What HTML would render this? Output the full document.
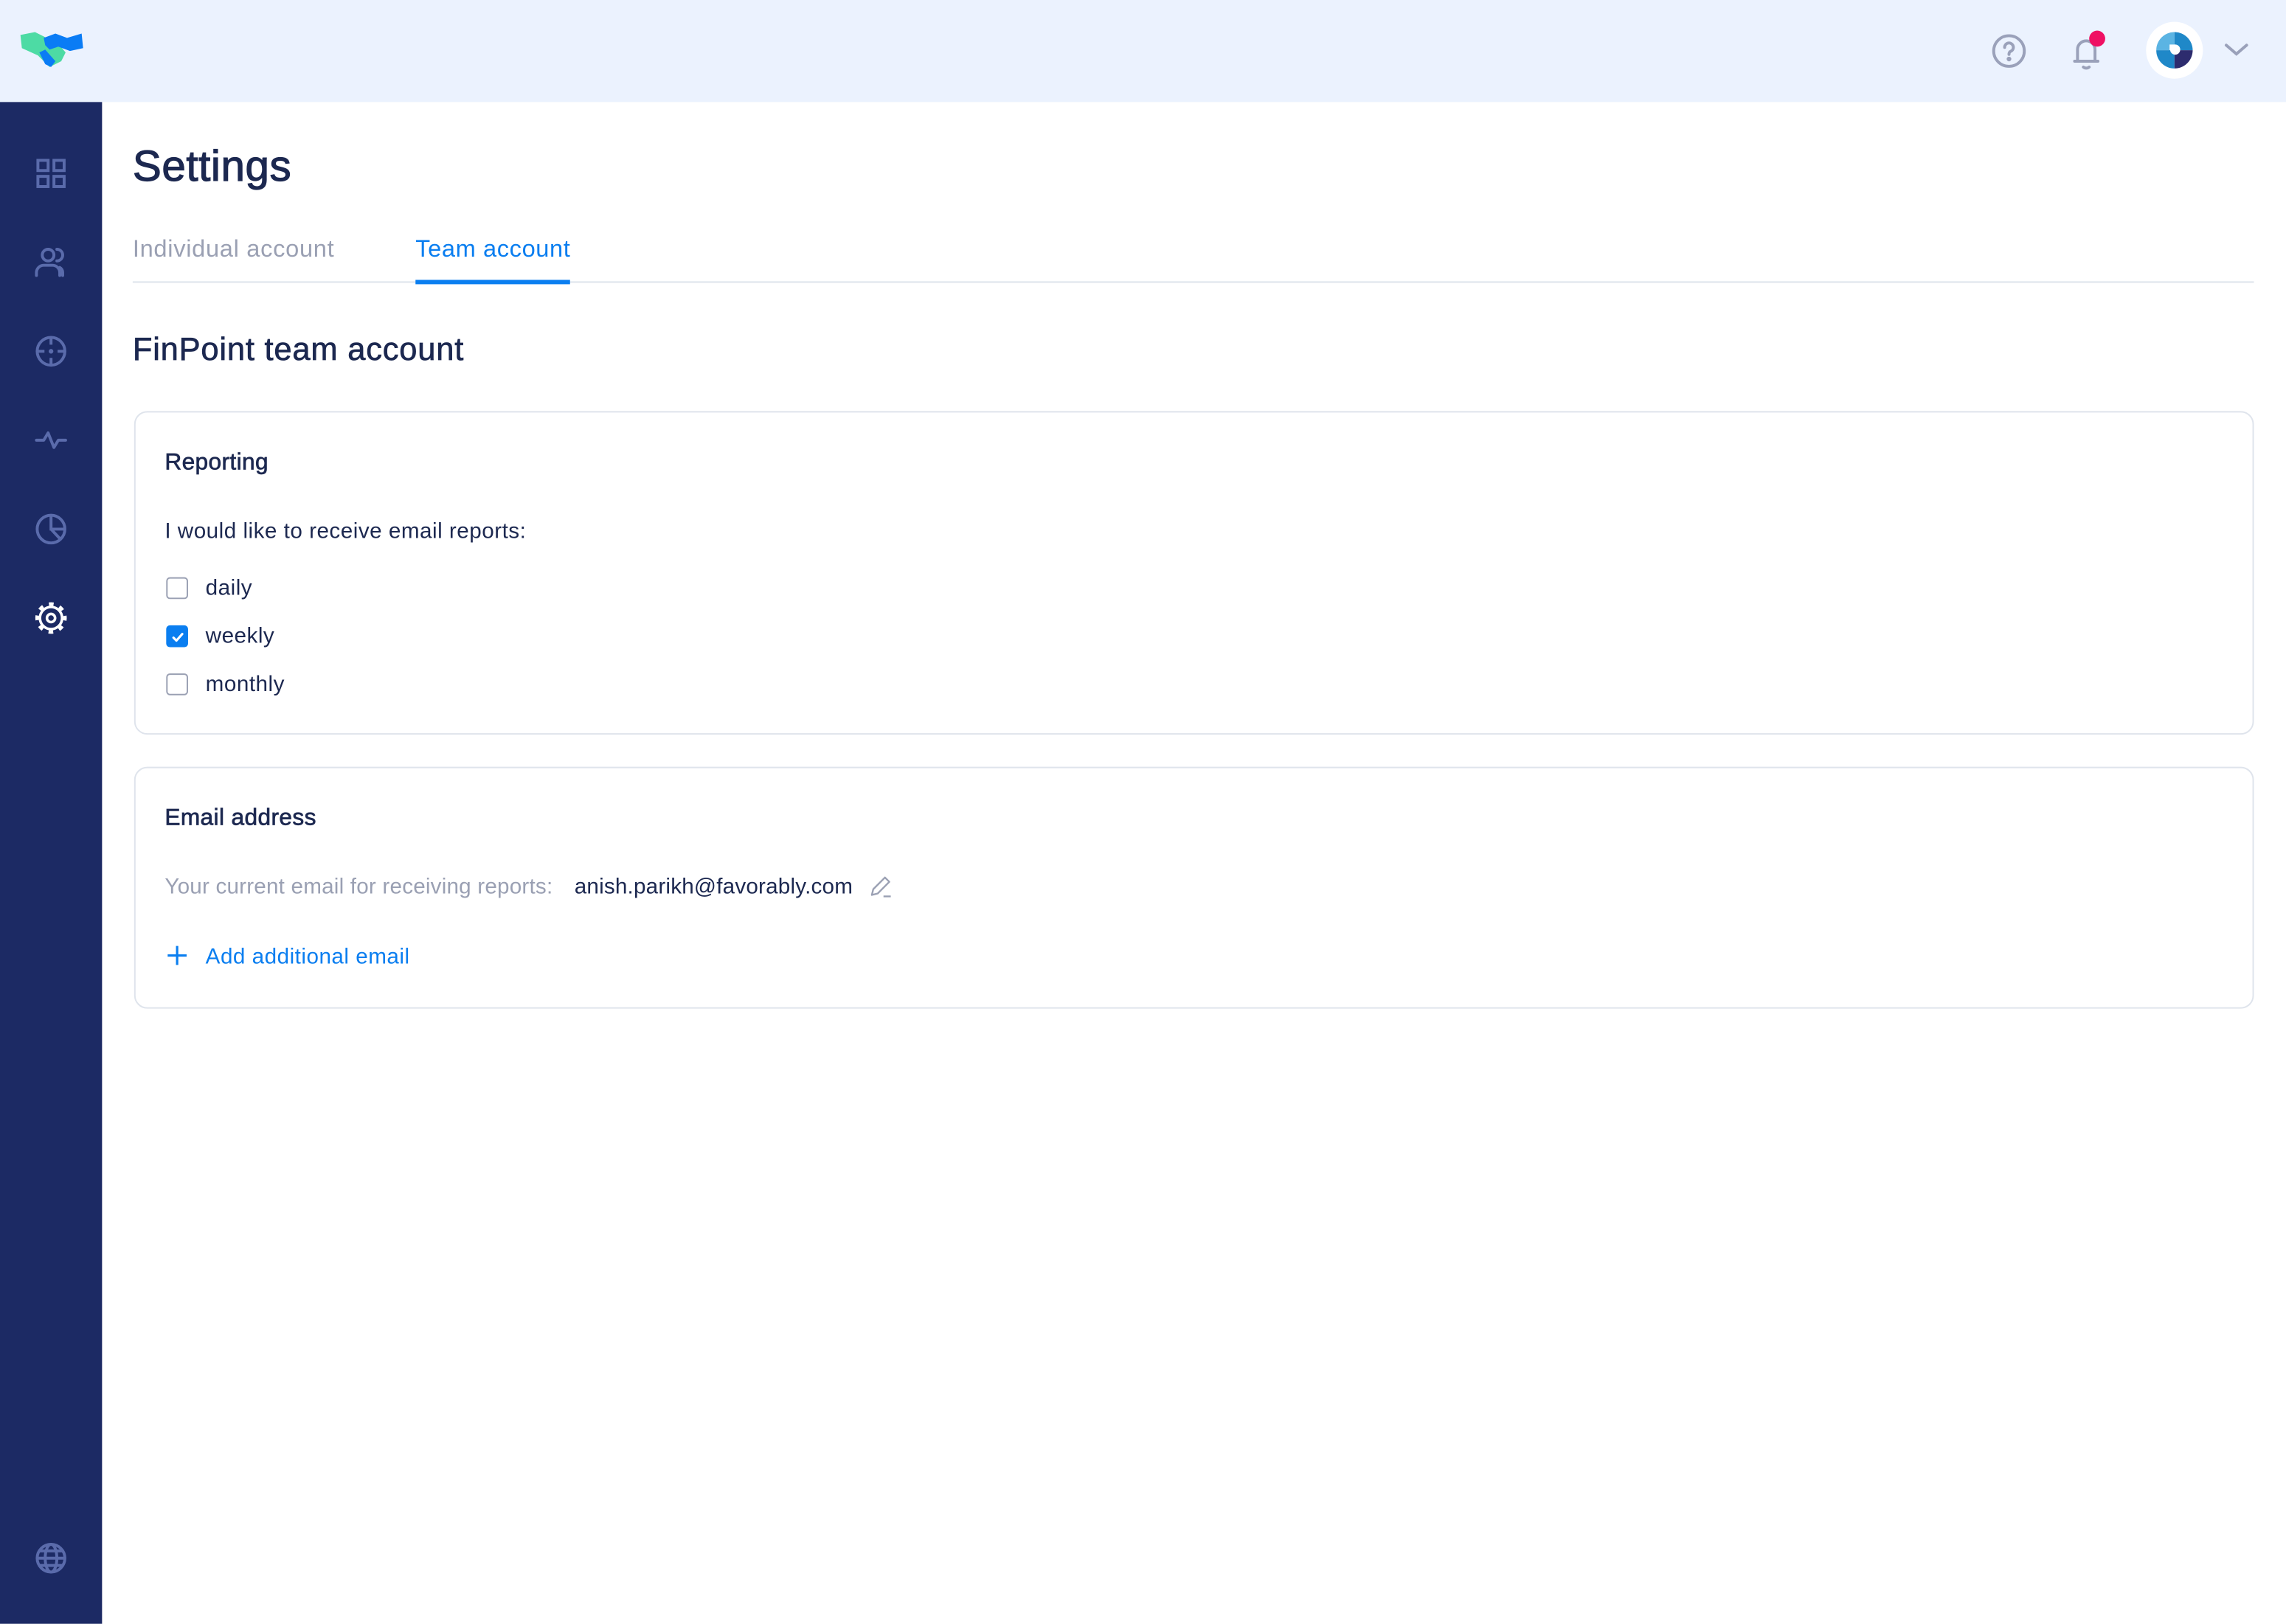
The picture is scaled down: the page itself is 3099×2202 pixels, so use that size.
<!DOCTYPE html>
<html><head><meta charset="utf-8"><style>
html,body{margin:0;padding:0;width:3099px;height:2202px;overflow:hidden;background:#fff}
#w{position:absolute;left:0;top:0;width:1568px;height:1114px;transform:scale(1.9764);transform-origin:0 0;font-family:"Liberation Sans",Arial,sans-serif;color:#1c2850}
.a{position:absolute}
#top{left:0;top:0;width:1568px;height:70px;background:#ebf2fe}
#side{left:0;top:70px;width:70px;height:1044px;background:#1c2a64}
.ic{position:absolute;left:23px;width:24px;height:24px}
.card{position:absolute;left:92px;width:1452px;border:1px solid #dfe4ec;border-radius:9px;background:#fff}
.t{position:absolute;white-space:nowrap;letter-spacing:0.25px}
.m{-webkit-text-stroke:0.35px currentColor}
.cb{position:absolute;left:114px;width:13px;height:13px;border:1.5px solid #9aa0b3;border-radius:2.5px}
</style></head><body><div id="w">
<div class="a" id="top"></div>
<svg class="a" style="left:12px;top:20px" width="46" height="28" viewBox="0 0 46 28">
<path d="M2 4 L12 2 L20 6 L28 10 L33 16 L30 22 L22 26 L14 18 L3 13 Z" fill="#4ddba4"/>
<path d="M18 6 L26 3 L34 6 L44 3 L45 13 L36 15 L28 12 L22 14 L19 11 Z" fill="#0a7cf5"/>
<path d="M15 16 L19 14 L26 22 L23 26 L19 24 Z" fill="#0a7cf5"/>
</svg>
<svg class="a" style="left:1366px;top:23px" width="24" height="24" viewBox="0 0 24 24" fill="none" stroke="#9aa1ba" stroke-width="2"><circle cx="12" cy="12" r="10.5"/><path d="M9 9.5a3 3 0 1 1 4 2.8c-.8.4-1 1-1 2" stroke-linecap="round"/><circle cx="12" cy="17.5" r=".6" fill="#9aa1ba"/></svg>
<svg class="a" style="left:1418px;top:22px" width="28" height="28" viewBox="0 0 28 28" fill="none" stroke="#9aa1ba" stroke-width="2" stroke-linecap="round"><path d="M5 20h16M7 20V12a6 6 0 0 1 12 0v8"/><path d="M11 24q2 1.5 4 0"/></svg>
<div class="a" style="left:1433px;top:21px;width:11px;height:11px;border-radius:50%;background:#ef1063"></div>
<div class="a" style="left:1472px;top:15px;width:39px;height:39px;border-radius:50%;background:#fff"></div>
<svg class="a" style="left:1479px;top:22px" width="25" height="25" viewBox="0 0 26 26"><path d="M13 13V0A13 13 0 0 0 0 13Z" fill="#5bb4e3"/><path d="M13 13V0A13 13 0 0 1 26 13Z" fill="#1f88c8"/><path d="M13 13H0A13 13 0 0 0 13 26Z" fill="#1f88c8"/><path d="M13 13H26A13 13 0 0 1 13 26Z" fill="#2d2c6e"/><circle cx="13.5" cy="12.5" r="3.6" fill="#fff"/><rect x="9.5" y="8.9" width="4" height="4" fill="#fff"/></svg>
<svg class="a" style="left:1525px;top:28px" width="18" height="12" viewBox="0 0 18 12" fill="none" stroke="#9aa1ba" stroke-width="2" stroke-linecap="round"><path d="M2 3l7 6 7-6"/></svg>

<div class="a" id="side"></div>
<svg class="ic" style="top:107px" viewBox="0 0 24 24" fill="none" stroke="#5a6bab" stroke-width="2"><rect x="3" y="3" width="7" height="7"/><rect x="14" y="3" width="7" height="7"/><rect x="3" y="14" width="7" height="7"/><rect x="14" y="14" width="7" height="7"/></svg>
<svg class="ic" style="top:168px" viewBox="0 0 24 24" fill="none" stroke="#5a6bab" stroke-width="2" stroke-linecap="round"><circle cx="10" cy="7" r="4"/><path d="M2 21v-2a5 5 0 0 1 5-5h6a5 5 0 0 1 5 5v2"/><path d="M16 3a4 4 0 0 1 0 8M20 21v-2a4 4 0 0 0-2-3.5"/></svg>
<svg class="ic" style="top:229px" viewBox="0 0 24 24" fill="none" stroke="#5a6bab" stroke-width="2"><circle cx="12" cy="12" r="9.5"/><path d="M12 2.5v5M12 16.5v5M2.5 12h5M16.5 12h5"/><circle cx="12" cy="12" r=".6" fill="#5a6bab"/></svg>
<svg class="ic" style="top:290px" viewBox="0 0 24 24" fill="none" stroke="#5a6bab" stroke-width="2" stroke-linecap="round" stroke-linejoin="round"><path d="M2 12h5l3-5 4 10 3-5h5"/></svg>
<svg class="ic" style="top:351px" viewBox="0 0 24 24" fill="none" stroke="#5a6bab" stroke-width="2"><circle cx="12" cy="12" r="9.5"/><path d="M12 2.5V12h9.5M12 12l6.5 7"/></svg>
<svg class="ic" style="top:412px" viewBox="0 0 24 24" fill="none" stroke="#fff"><circle cx="12" cy="12" r="7.6" stroke-width="1.8"/><circle cx="12" cy="12" r="9.6" stroke-width="2.4" stroke-dasharray="3.2 4.34" transform="rotate(-9 12 12)"/><circle cx="12" cy="12" r="2.8" stroke-width="1.8"/></svg>
<svg class="ic" style="top:1057px" viewBox="0 0 24 24" fill="none" stroke="#5a6bab" stroke-width="2"><circle cx="12" cy="12" r="9.5"/><ellipse cx="12" cy="12" rx="4" ry="9.5"/><path d="M2.5 12h19M4 7h16M4 17h16"/></svg>

<div class="t m" style="left:91px;top:98px;font-size:29.5px;letter-spacing:0.3px;-webkit-text-stroke:0.6px #1c2850">Settings</div>
<div class="t" style="left:91px;top:162px;font-size:16.5px;color:#9aa0b3;letter-spacing:0.35px">Individual account</div>
<div class="t" style="left:285px;top:162px;font-size:16.5px;color:#0a7ef0;letter-spacing:0.3px">Team account</div>
<div class="a" style="left:91px;top:193px;width:1455px;height:1px;background:#dde3eb"></div>
<div class="a" style="left:285px;top:192px;width:106px;height:3px;background:#0a7ef0"></div>
<div class="t m" style="left:91px;top:227px;font-size:22px;letter-spacing:0.4px">FinPoint team account</div>

<div class="card" style="top:282px;height:220px"></div>
<div class="t m" style="left:113px;top:309px;font-size:16px;letter-spacing:0.2px">Reporting</div>
<div class="t" style="left:113px;top:356px;font-size:15px">I would like to receive email reports:</div>
<div class="cb" style="top:396px"></div><div class="t" style="left:141px;top:395px;font-size:15px">daily</div>
<div class="cb" style="top:429px;background:#0a7ef0;border-color:#0a7ef0"></div>
<svg class="a" style="left:115px;top:430px" width="14" height="14" viewBox="0 0 14 14" fill="none" stroke="#fff" stroke-width="1.6" stroke-linecap="round" stroke-linejoin="round"><path d="M4 7.5l2 2 4-4.5"/></svg>
<div class="t" style="left:141px;top:428px;font-size:15px">weekly</div>
<div class="cb" style="top:462px"></div><div class="t" style="left:141px;top:461px;font-size:15px">monthly</div>

<div class="card" style="top:526px;height:164px"></div>
<div class="t m" style="left:113px;top:553px;font-size:16px;letter-spacing:0.2px">Email address</div>
<div class="t" style="left:113px;top:600px;font-size:15px;color:#9aa0b3;letter-spacing:0.1px">Your current email for receiving reports:</div>
<div class="t" style="left:394px;top:600px;font-size:15px;letter-spacing:0.1px">anish.parikh@favorably.com</div>
<svg class="a" style="left:596px;top:600px" width="16" height="16" viewBox="0 0 16 16" fill="none" stroke="#9aa0b3" stroke-width="1.2" stroke-linejoin="round"><path d="M2 14l1-4 8-8 3 3-8 8zM10 15h5"/></svg>
<svg class="a" style="left:114px;top:648px" width="15" height="15" viewBox="0 0 15 15" stroke="#0a7ef0" stroke-width="1.6"><path d="M7.5 1v13M1 7.5h13"/></svg>
<div class="t" style="left:141px;top:648px;font-size:15px;color:#0a7ef0">Add additional email</div>
</div></body></html>
